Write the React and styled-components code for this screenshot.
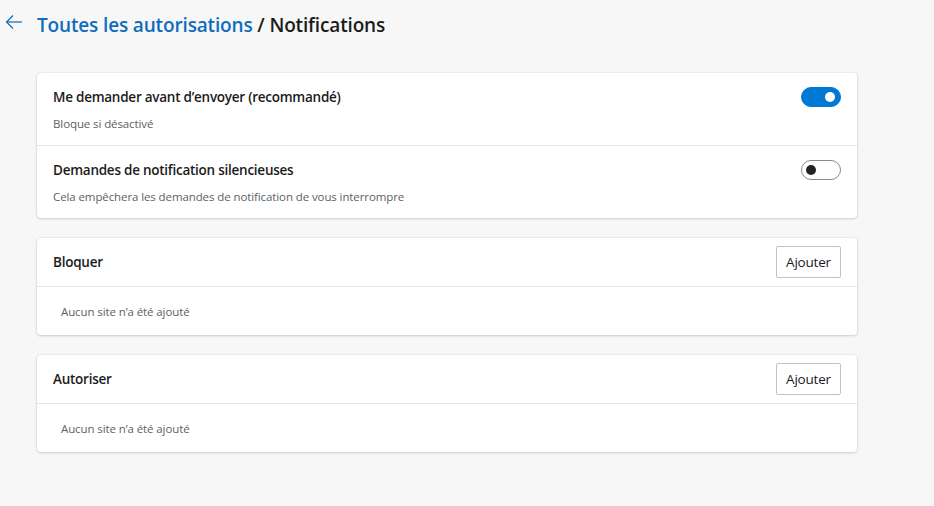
import React from "react";
import styled, { createGlobalStyle } from "styled-components";

const Global = createGlobalStyle`
  html, body { margin: 0; padding: 0; background: #f7f7f7; }
  body { font-family: "Segoe UI", "Open Sans", "Noto Sans", sans-serif; color: #1b1b1b; }
  * { box-sizing: border-box; }
`;

const Page = styled.div`
  width: 934px;
  height: 506px;
  background: #f7f7f7;
  padding: 0 0 0 37px;
`;

const Header = styled.div`
  position: relative;
  height: 73px;
  display: flex;
  align-items: flex-start;
  padding-top: 11px;
`;

const BackButton = styled.button`
  position: absolute;
  left: -33px;
  top: 12px;
  width: 20px;
  height: 20px;
  padding: 0;
  border: none;
  background: transparent;
  display: flex;
  align-items: center;
  justify-content: center;
  color: #0f6cbd;
`;

const Title = styled.h1`
  margin: 0;
  font-size: 19px;
  font-weight: 600;
  letter-spacing: -0.15px;
  line-height: 28px;
  color: #1b1b1b;
`;

const Crumb = styled.span`
  color: #0f6cbd;
`;

const Stack = styled.div`
  width: 820px;
  display: flex;
  flex-direction: column;
  gap: 20px;
`;

const Card = styled.section`
  background: #fff;
  border-radius: 4px;
  box-shadow: 0 0 2px rgba(0, 0, 0, 0.12), 0 1px 3px rgba(0, 0, 0, 0.14);
`;

const Row = styled.div`
  height: ${(p) => (p.$divider ? "73px" : "72px")};
  display: flex;
  align-items: flex-start;
  justify-content: space-between;
  padding: 14px 16px 0 16px;
  border-top: ${(p) => (p.$divider ? "1px solid #e6e6e6" : "none")};
`;

const RowText = styled.div`
  display: flex;
  flex-direction: column;
`;

const RowTitle = styled.div`
  font-size: 13.5px;
  font-weight: 600;
  letter-spacing: -0.25px;
  line-height: 20px;
  color: #1b1b1b;
`;

const RowSub = styled.div`
  margin-top: 9px;
  font-size: 11.5px;
  letter-spacing: -0.1px;
  line-height: 16px;
  color: #616161;
`;

const Toggle = styled.button`
  width: 40px;
  height: 20px;
  border-radius: 10px;
  padding: 0;
  position: relative;
  border: 1px solid ${(p) => (p.$on ? "#0078d4" : "#8a8a8a")};
  background: ${(p) => (p.$on ? "#0078d4" : "#fff")};
  cursor: pointer;
  &::after {
    content: "";
    position: absolute;
    top: 4px;
    left: ${(p) => (p.$on ? "23px" : "4px")};
    width: 10px;
    height: 10px;
    border-radius: 50%;
    background: ${(p) => (p.$on ? "#fff" : "#242424")};
  }
`;

const SectionHead = styled.div`
  height: 49px;
  display: flex;
  align-items: center;
  justify-content: space-between;
  padding: 0 16px;
  border-bottom: 1px solid #e6e6e6;
`;

const AddButton = styled.button`
  width: 65px;
  height: 32px;
  border: 1px solid #c2c2c2;
  border-radius: 2px;
  background: #fff;
  font-family: inherit;
  font-size: 13.5px;
  letter-spacing: -0.2px;
  color: #1b1b1b;
  padding: 0;
  cursor: pointer;
`;

const Empty = styled.div`
  height: 48px;
  display: flex;
  align-items: center;
  padding: 0 24px;
  font-size: 11.5px;
  letter-spacing: -0.1px;
  color: #616161;
`;

function Arrow() {
  return (
    <svg width="18" height="16" viewBox="0 0 18 16" fill="none" stroke="currentColor" strokeWidth="1.2">
      <path d="M17 8H1.5" />
      <path d="M8 1.5L1.5 8L8 14.5" />
    </svg>
  );
}

function Section({ title }) {
  return (
    <Card>
      <SectionHead>
        <RowTitle>{title}</RowTitle>
        <AddButton>Ajouter</AddButton>
      </SectionHead>
      <Empty>Aucun site n’a été ajouté</Empty>
    </Card>
  );
}

export default function App() {
  return (
    <>
      <Global />
      <Page>
        <Header>
          <BackButton aria-label="Retour">
            <Arrow />
          </BackButton>
          <Title>
            <Crumb>Toutes les autorisations</Crumb> / Notifications
          </Title>
        </Header>
        <Stack>
          <Card>
            <Row>
              <RowText>
                <RowTitle>Me demander avant d’envoyer (recommandé)</RowTitle>
                <RowSub>Bloque si désactivé</RowSub>
              </RowText>
              <Toggle $on aria-label="activé" />
            </Row>
            <Row $divider>
              <RowText>
                <RowTitle>Demandes de notification silencieuses</RowTitle>
                <RowSub>Cela empêchera les demandes de notification de vous interrompre</RowSub>
              </RowText>
              <Toggle aria-label="désactivé" />
            </Row>
          </Card>
          <Section title="Bloquer" />
          <Section title="Autoriser" />
        </Stack>
      </Page>
    </>
  );
}
